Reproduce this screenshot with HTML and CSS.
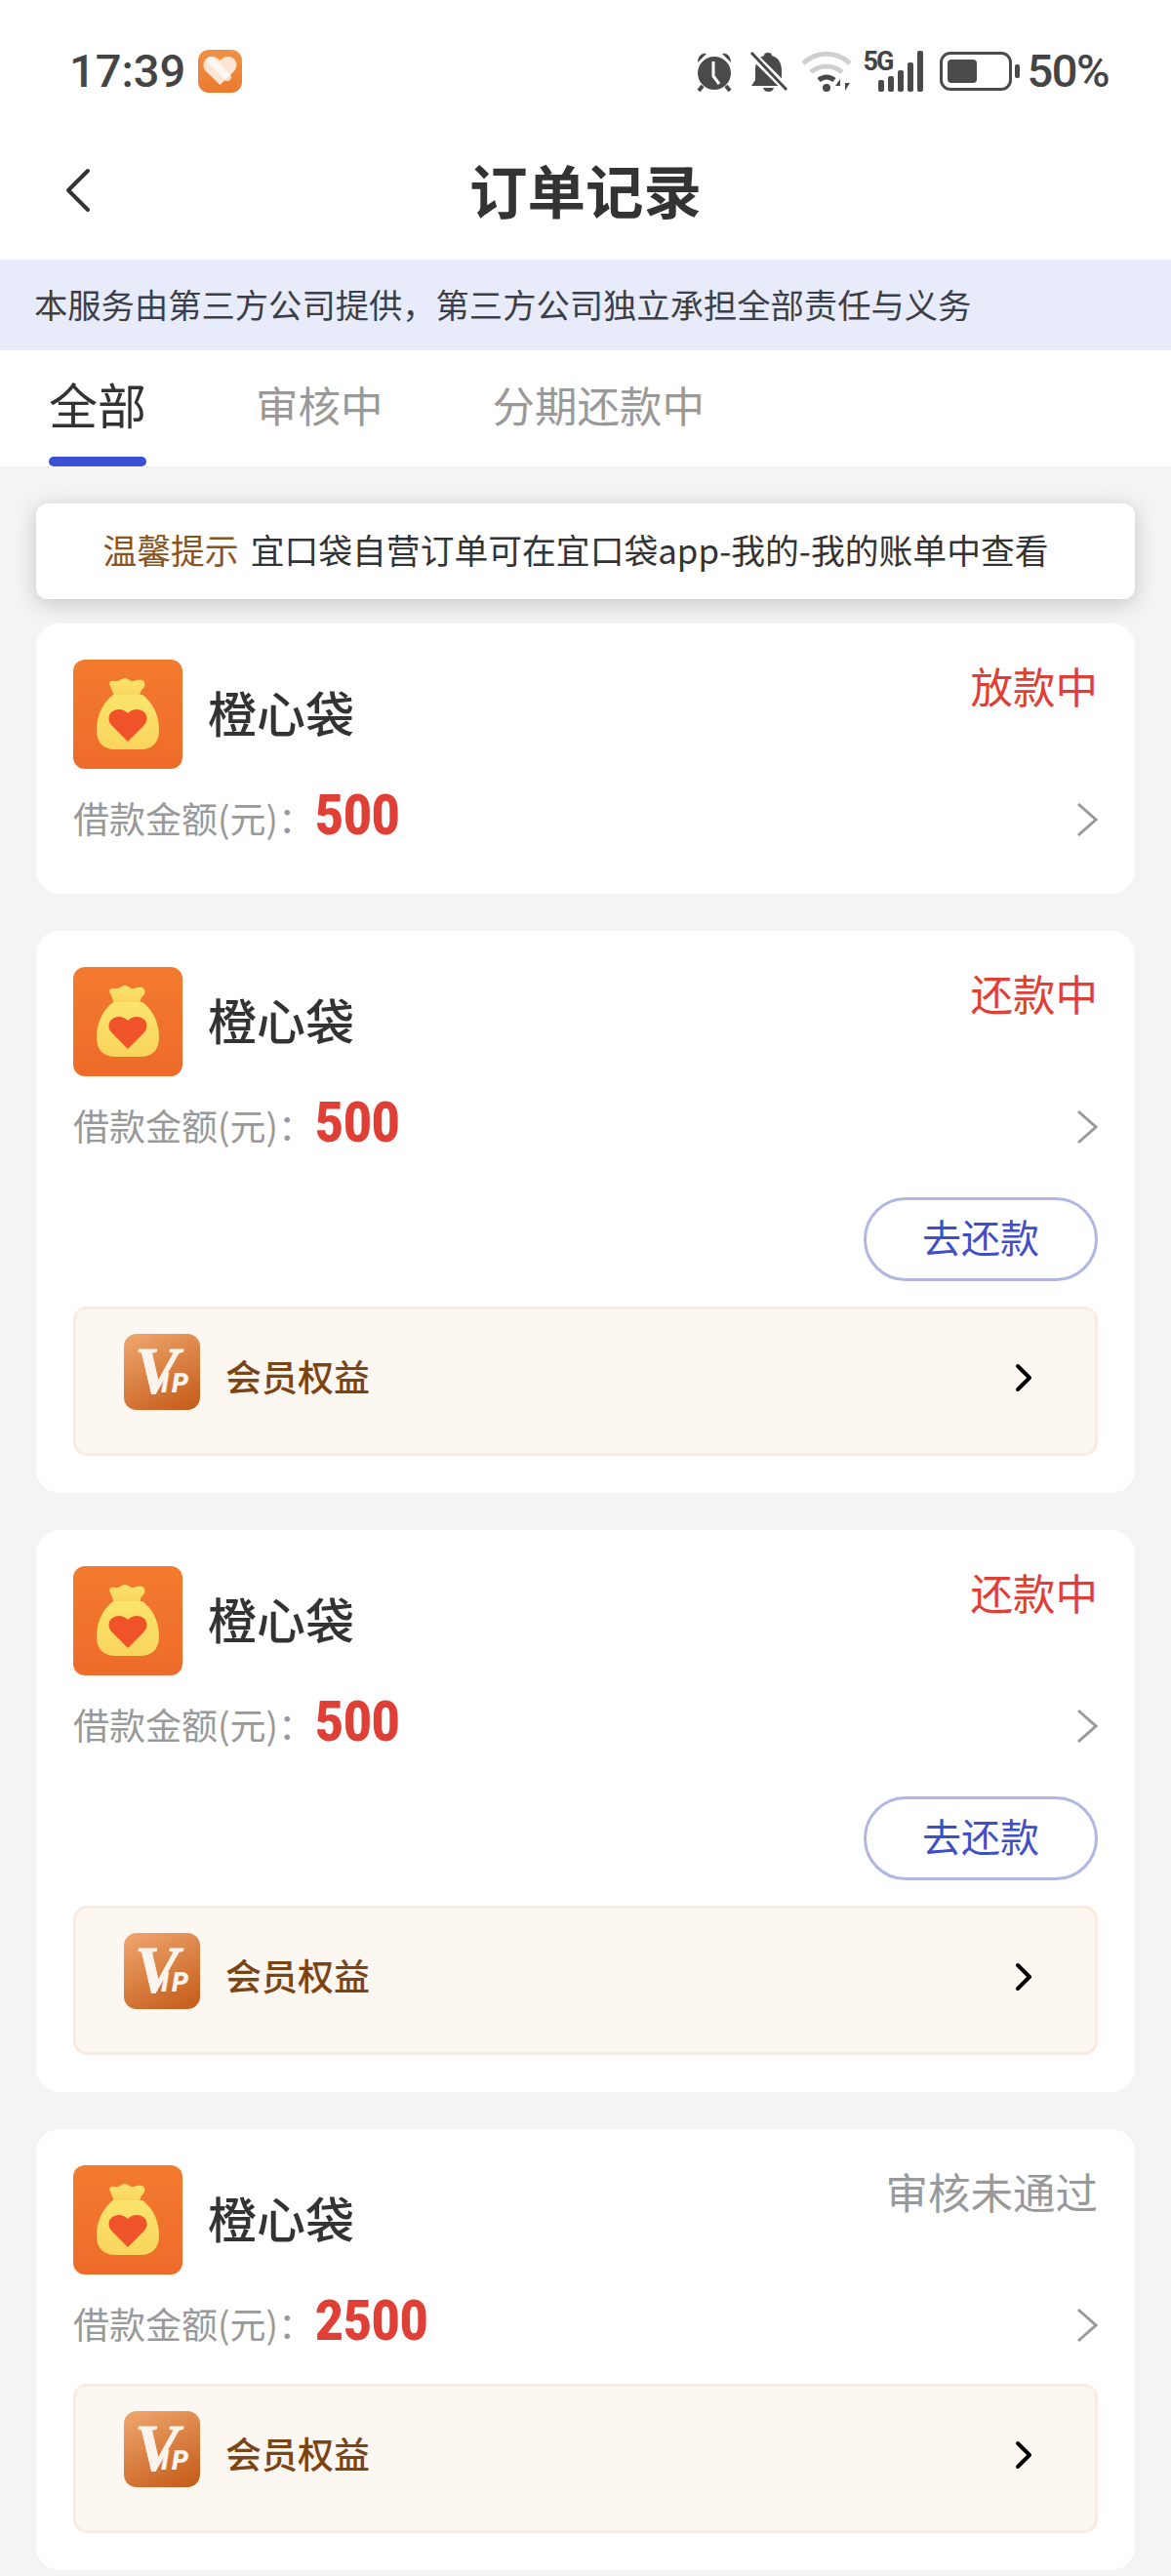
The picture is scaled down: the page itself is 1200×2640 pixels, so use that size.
FILE: index.html
```html
<!DOCTYPE html>
<html lang="zh-CN">
<head>
<meta charset="utf-8">
<title>订单记录</title>
<link rel="stylesheet" href="styles.css">
</head>
<body>
<svg class="defs" width="0" height="0" aria-hidden="true">
  <defs>
    <linearGradient id="bagbg" x1="0" y1="0" x2="0" y2="1"><stop offset="0" stop-color="#f37b2f"/><stop offset="1" stop-color="#ee6b2a"/></linearGradient>
    <linearGradient id="bagfill" x1="0" y1="0" x2="0" y2="1"><stop offset="0" stop-color="#fbe46c"/><stop offset="1" stop-color="#f9d45c"/></linearGradient>
    <linearGradient id="vipbg" x1="0.2" y1="0" x2="0.7" y2="1"><stop offset="0" stop-color="#eda26a"/><stop offset="1" stop-color="#c8611f"/></linearGradient>
    <linearGradient id="heartbg" x1="0" y1="0" x2="0" y2="1"><stop offset="0" stop-color="#f09044"/><stop offset="1" stop-color="#ec7a2e"/></linearGradient>
    <symbol id="bag" viewBox="0 0 112 112">
      <rect width="112" height="112" rx="12" fill="url(#bagbg)"/>
      <path d="M38 27c-2-3 0-6 4-5 5 1 8-3 11-3 3 0 6 4 9 3 4-1 8-2 10 0 3 3 1 7-2 9l-2 6H42z" fill="url(#bagfill)"/>
      <path d="M41 36h30c8 6 17 18 17 36 0 14-8 20-19 20H43c-11 0-19-6-19-20 0-18 9-30 17-36z" fill="url(#bagfill)"/>
      <path d="M56 84 40 68c-5-5-4-11-1-14 5-4 12-4 17 1 5-5 12-5 17-1 3 3 4 9-1 14z" fill="#f0532a"/>
    </symbol>
    <symbol id="vip" viewBox="0 0 78 78">
      <rect width="78" height="78" rx="13" fill="url(#vipbg)"/>
      <text x="11" y="60" class="vip-v">V</text>
      <text x="38" y="60" class="vip-ip">IP</text>
    </symbol>
  </defs>
</svg>
<div class="phone">
  <header class="top">
    <div class="status">
      <div class="status-left">
        <span class="time">17:39</span>
        <svg class="app-dot" viewBox="0 0 45 44"><rect width="45" height="44" rx="11" fill="url(#heartbg)"/><path d="M22.500 36 8 22c-4-5-3-11 2-14 4-2 9-1 12.500 3 3.500-4 8.500-5 12.500-3 5 3 6 9 2 14z" fill="#fbe6d5"/><path d="M13 11 30 28" stroke="#fff" stroke-width="8" stroke-linecap="round" opacity=".7"/></svg>
      </div>
      <div class="status-right">
        <svg class="s-alarm" viewBox="0 0 40 44"><circle cx="20" cy="24" r="17" fill="#4a4a4a"/><path d="M3 13C3 6 8 3 12 4zM37 13c0-7-5-10-9-9z" fill="#4a4a4a"/><path d="m8 37-4 5M32 37l4 5" stroke="#4a4a4a" stroke-width="4"/><path d="M19 12v15l6 8" fill="none" stroke="#fff" stroke-width="3"/></svg>
        <svg class="s-bell" viewBox="0 0 41 44"><path d="M20 3c3 0 4 1 4 3 7 2 10 8 10 15v10l4 6H3l4-6V20c0-7 3-12 9-14 0-2 1-3 4-3z" fill="#4a4a4a"/><path d="M15 39h11c-1 3-3 4-5.500 4S16 42 15 39z" fill="#4a4a4a"/><path d="M2 3 40 41" stroke="#fff" stroke-width="8"/><path d="M3 3l36 38" stroke="#4a4a4a" stroke-width="3"/></svg>
        <svg class="s-wifi" viewBox="0 0 54 44"><path d="M2 14C16 1 36 1 50 14" fill="none" stroke="#cfcfcf" stroke-width="5"/><path d="M10 23c9-8 23-8 32 0" fill="none" stroke="#cfcfcf" stroke-width="5"/><path d="M18 31c5-4 11-4 16 0" fill="none" stroke="#4a4a4a" stroke-width="5"/><circle cx="26" cy="39" r="4" fill="#4a4a4a"/><path d="M40 42V30l-5 7h5zM45 29v13l5-8h-5z" fill="#4a4a4a"/></svg>
        <div class="s-net">
          <span class="five-g">5G</span>
          <div class="bars"><i class="b1"></i><i class="b2"></i><i class="b3"></i><i class="b4"></i><i class="b5"></i></div>
        </div>
        <div class="battery"><div class="batt-body"><div class="batt-fill"></div></div><div class="batt-nub"></div></div>
        <span class="pct">50%</span>
      </div>
    </div>
    <div class="nav">
      <svg class="back" viewBox="0 0 28 46"><path d="M24 3 4 23l20 20" fill="none" stroke="#333" stroke-width="4" stroke-linecap="round" stroke-linejoin="round"/></svg>
      <h1 class="title">订单记录</h1>
    </div>
  </header>
  <div class="band">本服务由第三方公司提供，第三方公司独立承担全部责任与义务</div>
  <nav class="tabs">
    <a class="tab active">全部</a>
    <a class="tab">审核中</a>
    <a class="tab">分期还款中</a>
  </nav>
  <main class="list">
    <div class="tip"><span class="tip-label">温馨提示</span><span>宜口袋自营订单可在宜口袋app-我的-我的账单中查看</span></div>

    <section class="card">
      <div class="head">
        <svg class="logo"><use href="#bag"/></svg>
        <span class="name">橙心袋</span>
        <span class="state red">放款中</span>
      </div>
      <div class="amount">
        <span class="label">借款金额(元)：</span><span class="value">500</span>
        <svg class="more" viewBox="0 0 22 36"><path d="m2 2 18 16L2 34" fill="none" stroke="#999" stroke-width="3"/></svg>
      </div>
    </section>

    <section class="card">
      <div class="head">
        <svg class="logo"><use href="#bag"/></svg>
        <span class="name">橙心袋</span>
        <span class="state red">还款中</span>
      </div>
      <div class="amount">
        <span class="label">借款金额(元)：</span><span class="value">500</span>
        <svg class="more" viewBox="0 0 22 36"><path d="m2 2 18 16L2 34" fill="none" stroke="#999" stroke-width="3"/></svg>
      </div>
      <div class="actions"><a class="pay">去还款</a></div>
      <div class="vipbox">
        <svg class="vip-logo"><use href="#vip"/></svg>
        <span class="vip-text">会员权益</span>
        <svg class="vip-go" viewBox="0 0 18 30"><path d="m3 3 12 12L3 27" fill="none" stroke="#000" stroke-width="4" stroke-linecap="round" stroke-linejoin="round"/></svg>
      </div>
    </section>

    <section class="card">
      <div class="head">
        <svg class="logo"><use href="#bag"/></svg>
        <span class="name">橙心袋</span>
        <span class="state red">还款中</span>
      </div>
      <div class="amount">
        <span class="label">借款金额(元)：</span><span class="value">500</span>
        <svg class="more" viewBox="0 0 22 36"><path d="m2 2 18 16L2 34" fill="none" stroke="#999" stroke-width="3"/></svg>
      </div>
      <div class="actions"><a class="pay">去还款</a></div>
      <div class="vipbox">
        <svg class="vip-logo"><use href="#vip"/></svg>
        <span class="vip-text">会员权益</span>
        <svg class="vip-go" viewBox="0 0 18 30"><path d="m3 3 12 12L3 27" fill="none" stroke="#000" stroke-width="4" stroke-linecap="round" stroke-linejoin="round"/></svg>
      </div>
    </section>

    <section class="card">
      <div class="head">
        <svg class="logo"><use href="#bag"/></svg>
        <span class="name">橙心袋</span>
        <span class="state gray">审核未通过</span>
      </div>
      <div class="amount">
        <span class="label">借款金额(元)：</span><span class="value">2500</span>
        <svg class="more" viewBox="0 0 22 36"><path d="m2 2 18 16L2 34" fill="none" stroke="#999" stroke-width="3"/></svg>
      </div>
      <div class="vipbox tight">
        <svg class="vip-logo"><use href="#vip"/></svg>
        <span class="vip-text">会员权益</span>
        <svg class="vip-go" viewBox="0 0 18 30"><path d="m3 3 12 12L3 27" fill="none" stroke="#000" stroke-width="4" stroke-linecap="round" stroke-linejoin="round"/></svg>
      </div>
    </section>
  </main>
</div>
</body>
</html>
```
FILE: styles.css
```css
* { box-sizing: border-box; }
html, body { margin: 0; padding: 0; }
body {
  width: 1200px;
  height: 2640px;
  overflow: hidden;
  background: #f4f4f4;
  font-family: "Noto Sans CJK SC", "Noto Sans", sans-serif;
  color: #333;
}
.defs { position: absolute; }
.phone { display: flex; flex-direction: column; }
.top { background: #fff; height: 266px; display: flex; flex-direction: column; flex: none; }
.status {
  height: 130px;
  flex: none;
  padding: 51px 64px 0 71px;
  display: flex;
  justify-content: space-between;
  align-items: flex-start;
}
.status-left { display: flex; align-items: center; gap: 13px; height: 44px; }
.time { font: 500 47px/44px Roboto, sans-serif; color: #444; }
.app-dot { width: 45px; height: 44px; }
.status-right { display: flex; align-items: center; height: 44px; }
.s-alarm { width: 40px; height: 44px; margin-right: 15px; }
.s-bell { width: 41px; height: 44px; margin-right: 13px; }
.s-wifi { width: 54px; height: 44px; margin-right: 9px; }
.s-net { width: 62px; height: 44px; position: relative; margin-right: 17px; }
.five-g {
  position: absolute; left: 0; top: 0;
  font: 700 27px/24px "Roboto", sans-serif;
  letter-spacing: -2px;
  color: #444;
}
.bars { position: absolute; right: 0; bottom: 1px; display: flex; align-items: flex-end; gap: 4px; }
.bars i { display: block; width: 6px; border-radius: 2px; background: #4a4a4a; }
.b1 { height: 12px; } .b2 { height: 16px; } .b3 { height: 22px; } .b4 { height: 30px; } .b5 { height: 42px; }
.battery { display: flex; align-items: center; gap: 3px; margin-right: 7px; }
.batt-body { width: 74px; height: 40px; border: 3px solid #4a4a4a; border-radius: 11px; padding: 5px; }
.batt-fill { width: 30px; height: 100%; background: #4a4a4a; border-radius: 4px; }
.batt-nub { width: 5px; height: 14px; background: #4a4a4a; border-radius: 2px; }
.pct { font: 500 47px/44px Roboto, sans-serif; color: #444; letter-spacing: -1.500px; }
.nav { position: relative; height: 136px; display: flex; align-items: center; justify-content: center; padding-bottom: 10px; flex: none; }
.back { position: absolute; left: 66px; top: 42px; width: 28px; height: 46px; }
.title { margin: 0; font-size: 59.500px; font-weight: 700; line-height: 70px; color: #333; }
.band {
  height: 93px;
  flex: none;
  background: #e8ecfa;
  padding-left: 35px;
  font-size: 34.300px;
  line-height: 90px;
  color: #3c3f47;
  white-space: nowrap;
}
.tabs { height: 119px; flex: none; background: #fff; display: flex; padding-left: 50px; }
.tab { font-size: 43.500px; line-height: 112px; color: #999; margin-right: 112px; position: relative; }
.tab.active { font-size: 50px; line-height: 108px; color: #333; }
.tab.active::after {
  content: ""; position: absolute; left: 0; right: 0; bottom: 0;
  height: 10px; border-radius: 5px; background: #3a50d2;
}
.list { padding: 38px 37px 0; display: flex; flex-direction: column; }
.tip {
  height: 98px;
  flex: none;
  background: #fff;
  border-radius: 12px;
  box-shadow: 0 4px 22px rgba(0,0,0,.2);
  display: flex;
  align-items: center;
  justify-content: center;
  gap: 12px;
  font-size: 34.800px;
  color: #333;
  margin-bottom: 25px;
  padding: 0 20px 5px 0;
}
.tip-label { color: #8a5420; }
.card {
  flex: none;
  background: #fff;
  border-radius: 24px;
  padding: 37px 38px 28px;
  margin-bottom: 38px;
}
.head { display: flex; align-items: center; height: 112px; }
.logo { width: 112px; height: 112px; flex: none; }
.name { margin-left: 26px; font-size: 50px; line-height: 60px; color: #333; font-weight: 500; margin-bottom: 6px; }
.state { margin-left: auto; align-self: flex-start; font-size: 43.500px; line-height: 54px; }
.red { color: #df3f35; }
.gray { color: #999; }
.amount { height: 100px; display: flex; align-items: center; }
.label { font-size: 37px; color: #999; width: 248px; white-space: nowrap; }
.value { font: 900 58px/70px Roboto, sans-serif; color: #df3f35; margin-top: -6px; display: inline-block; transform: scaleX(.86); transform-origin: left center; }
.more { width: 22px; height: 36px; margin-left: auto; margin-top: 4px; }
.actions { display: flex; justify-content: flex-end; margin-top: 24px; }
.pay {
  width: 240px; height: 86px;
  border: 3px solid #b1b7e3;
  border-radius: 43px;
  text-align: center;
  font-size: 40px;
  line-height: 75px;
  color: #3f4fc6;
}
.vipbox {
  height: 153px;
  margin-top: 26px;
  margin-bottom: 10px;
  background: #fdf7f1;
  border: 3px solid #f9ebdf;
  border-radius: 14px;
  display: flex;
  align-items: center;
  padding: 0 64px 0 49px;
}
.vipbox.tight { margin-top: 12px; }
.vip-logo { width: 78px; height: 78px; flex: none; margin-bottom: 20px; }
.vip-text { margin-left: 26px; font-size: 37px; line-height: 50px; color: #7a4416; font-weight: 500; margin-bottom: 12px; }
.vip-go { width: 18px; height: 30px; margin-left: auto; margin-bottom: 8px; }
.vip-v { font: italic 700 68px "Liberation Serif", serif; fill: #fbf4ec; stroke: #fbf4ec; stroke-width: 1px; }
.vip-ip { font: italic 900 27px Roboto, sans-serif; fill: #fbf4ec; letter-spacing: 3px; }
```
